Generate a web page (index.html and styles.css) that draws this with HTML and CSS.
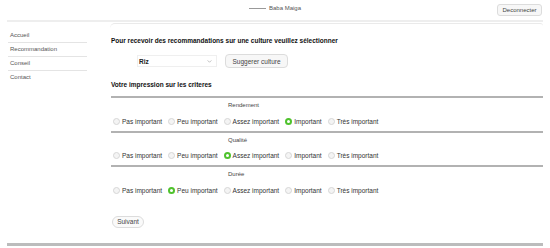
FILE: index.html
```html
<!DOCTYPE html>
<html lang="fr">
<head>
<meta charset="utf-8">
<title>Recommandation</title>
<link rel="stylesheet" href="styles.css">
</head>
<body>
<header class="top">
  <div class="user"><span class="user-line"></span><span>Baba Maiga</span></div>
  <button class="btn btn-logout">Deconnecter</button>
</header>
<div class="layout">
  <nav class="sidebar">
    <a class="nav-item">Accueil</a>
    <a class="nav-item">Recommandation</a>
    <a class="nav-item">Conseil</a>
    <a class="nav-item">Contact</a>
  </nav>
  <main class="content">
    <h2 class="title">Pour recevoir des recommandations sur une culture veuillez sélectionner</h2>
    <div class="pick">
      <div class="select"><span>Riz</span><svg class="chev" viewBox="0 0 6 4" width="5" height="3"><path d="M0.5 0.5 L3 3 L5.5 0.5" fill="none" stroke="#999" stroke-width="0.8"/></svg></div>
      <button class="btn btn-suggest">Suggerer culture</button>
    </div>
    <h2 class="title title-2">Votre impression sur les criteres</h2>
    <section class="crit">
      <div class="crit-name">Rendement</div>
      <div class="opts">
        <label class="opt"><span class="radio"></span>Pas important</label>
        <label class="opt"><span class="radio"></span>Peu important</label>
        <label class="opt"><span class="radio"></span>Assez important</label>
        <label class="opt"><span class="radio on"></span>Important</label>
        <label class="opt"><span class="radio"></span>Très important</label>
      </div>
    </section>
    <section class="crit">
      <div class="crit-name">Qualité</div>
      <div class="opts">
        <label class="opt"><span class="radio"></span>Pas important</label>
        <label class="opt"><span class="radio"></span>Peu important</label>
        <label class="opt"><span class="radio on"></span>Assez important</label>
        <label class="opt"><span class="radio"></span>Important</label>
        <label class="opt"><span class="radio"></span>Très important</label>
      </div>
    </section>
    <section class="crit">
      <div class="crit-name">Durée</div>
      <div class="opts">
        <label class="opt"><span class="radio"></span>Pas important</label>
        <label class="opt"><span class="radio on"></span>Peu important</label>
        <label class="opt"><span class="radio"></span>Assez important</label>
        <label class="opt"><span class="radio"></span>Important</label>
        <label class="opt"><span class="radio"></span>Très important</label>
      </div>
    </section>
    <button class="btn btn-next">Suivant</button>
  </main>
</div>
<div class="bottom"></div>
</body>
</html>
```
FILE: styles.css
```css
* { box-sizing: border-box; }
html, body { margin: 0; padding: 0; background: #fff; }
body {
  font-family: "Liberation Sans", "DejaVu Sans", sans-serif;
  font-size: 6.5px;
  color: #333;
  width: 550px;
  height: 248px;
  overflow: hidden;
  position: relative;
}
.btn {
  font-family: inherit;
  font-size: 6.5px;
  color: #444;
  background: #f7f7f7;
  border: 1px solid #dcdcdc;
  border-radius: 3px;
  padding: 0;
  cursor: pointer;
}
.top {
  position: relative;
  height: 22px;
  margin: 0 7px;
  border-bottom: 2px solid #eee;
  display: flex;
  align-items: flex-start;
  justify-content: center;
}
.user {
  margin-top: 5px;
  display: flex;
  align-items: center;
  gap: 3px;
  color: #555;
  font-size: 6px;
}
.user-line { width: 17px; height: 1px; background: #999; }
.btn-logout {
  position: absolute;
  right: 1px;
  top: 4px;
  width: 45px;
  height: 12px;
  font-size: 6px;
}
.layout { display: flex; margin: 0 7px; }
.sidebar {
  width: 99px;
  display: flex;
  flex-direction: column;
  padding: 7px 19px 0 1px;
}
.nav-item {
  height: 14px;
  line-height: 13px;
  padding-left: 2px;
  color: #555;
  font-size: 6px;
  border-bottom: 1px solid #e4e4e4;
}
.nav-item:last-child { border-bottom: none; }
.content {
  flex: 1;
  margin-left: 4px;
  margin-top: 1px;
  border-top: 1px solid #eaeaea;
  border-top-left-radius: 5px;
  border-top-right-radius: 3px;
  padding: 13px 0 0 1px;
}
.title {
  margin: 0;
  font-size: 6.5px;
  font-weight: bold;
  color: #111;
  height: 8px;
  line-height: 8px;
}
.pick {
  display: flex;
  align-items: center;
  gap: 8px;
  margin: 9px 0 0 26px;
  height: 14px;
}
.select {
  width: 80px;
  height: 12px;
  border: 1px solid #efefef;
  display: flex;
  align-items: center;
  justify-content: space-between;
  padding: 0 4px 0 1px;
  font-weight: bold;
  color: #222;
}
.btn-suggest { width: 63px; height: 14px; border-radius: 4px; }
.title-2 { margin-top: 13px; }
.crit {
  margin-top: 7px;
  border-top: 2px solid #b2b2b2;
  height: 34.5px;
}
.crit + .crit { margin-top: 0; }
.crit-name {
  margin: 3px 0 0 117px;
  height: 8px;
  line-height: 8px;
  color: #444;
  font-size: 6px;
}
.opts {
  display: flex;
  align-items: center;
  margin: 8px 0 0 2px;
  height: 8px;
}
.opt {
  display: flex;
  align-items: center;
  gap: 2px;
  margin-right: 6px;
  color: #333;
}
.radio {
  width: 7px;
  height: 7px;
  border-radius: 50%;
  border: 1px solid #d6d6d6;
  background: #f4f4f4;
  flex: none;
}
.radio.on {
  border: 2px solid #4fc22d;
  background: #fff;
}
.btn-next {
  display: block;
  margin: 16px 0 0 1px;
  width: 32px;
  height: 12px;
  border-radius: 6px;
  background: #fafafa;
}
.bottom {
  position: absolute;
  left: 7px;
  right: 7px;
  top: 243px;
  height: 3px;
  background: #bcbcbc;
}
```
